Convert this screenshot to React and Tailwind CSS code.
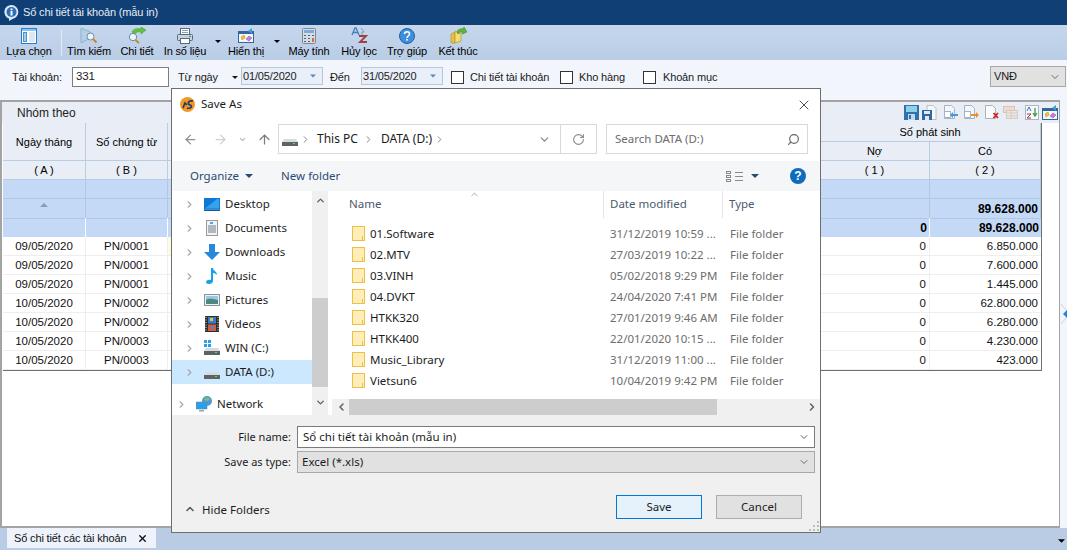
import React from 'react';
import { ArrowLeft, ArrowRight, ArrowUp, ChevronDown, ChevronLeft, ChevronRight, ChevronUp, RotateCw, Search, X } from 'lucide-react';

const Caret = ({ className = "" }) => (
    <svg width="8" height="4" viewBox="0 0 8 4" className={className}><path d="M0 0h8L4 4z" fill="currentColor" /></svg>
);

/* toolbar icons */
const IconChoose = () => (
    <svg width="16" height="16" viewBox="0 0 16 16">
        <rect x="0.500" y="0.500" width="15" height="15" fill="#fff" stroke="#1f7fd0" />
        <rect x="1" y="1" width="14" height="2" fill="#8cc4f0" />
        <rect x="2" y="4" width="4" height="10" fill="#4a94d4" />
        <path d="M3 6h2M3 8h2M3 10h2M3 12h2" stroke="#fff" />
        <rect x="8" y="4" width="6" height="10" fill="#dfe6ee" />
    </svg>
);
const IconSearch = () => (
    <svg width="18" height="17" viewBox="0 0 18 17">
        <path d="M1 1l9 4v6l-9 5z" fill="#b5cfe8" stroke="#8fb0d2" />
        <circle cx="10.500" cy="9.500" r="3.500" fill="#eef6fc" stroke="#6f8aa8" />
        <path d="M13 12l3.500 3.500" stroke="#c9852a" strokeWidth="2" />
    </svg>
);
const IconDetail = () => (
    <svg width="20" height="17" viewBox="0 0 20 17">
        <circle cx="6" cy="10" r="3.700" fill="#eaf3fb" stroke="#6f8aa8" />
        <path d="M8.500 13l3.500 3" stroke="#c9852a" strokeWidth="2" />
        <path d="M5 5c1-3 5-4 9-3V0l5 3-5 4V5c-3-.5-5 0-6 2z" fill="#62c23c" stroke="#3f9a28" strokeWidth=".5" />
    </svg>
);
const IconPrint = () => (
    <svg width="16" height="16" viewBox="0 0 16 16">
        <rect x="3.500" y="0.500" width="9" height="6" fill="#fff" stroke="#55697f" />
        <path d="M5 2.500h6M5 4.500h6" stroke="#8aa2ba" />
        <rect x="0.500" y="6.500" width="15" height="6" rx="1" fill="#c8d2dc" stroke="#55697f" />
        <rect x="3.500" y="10.500" width="9" height="5" fill="#fff" stroke="#55697f" />
        <rect x="12" y="8" width="2" height="1" fill="#3b9a3b" />
    </svg>
);
const IconDisplay = ({ size = 16 }) => (
    <svg width={size} height={size} viewBox="0 0 16 16">
        <rect x="0.500" y="3.500" width="15" height="11" fill="#f4f7fb" stroke="#33669c" />
        <rect x="1" y="4" width="14" height="2" fill="#33669c" />
        <path d="M3 9l3-2 1 3-3 2z" fill="#f4c430" stroke="#b78a16" strokeWidth=".5" />
        <path d="M8 11l3-3 3 2-3 3z" fill="#d078de" stroke="#8a4a9c" strokeWidth=".5" />
        <path d="M10 3l4-3v6z" fill="#3f9be0" />
    </svg>
);
const IconCalc = () => (
    <svg width="14" height="16" viewBox="0 0 14 16">
        <rect x="0.500" y="0.500" width="13" height="15" rx="1" fill="#d7dde4" stroke="#7b8794" />
        <rect x="2" y="2" width="10" height="3" fill="#7fa9d6" />
        <path d="M2 7h2v1H2zM6 7h2v1H6zM10 7h2v1h-2zM2 10h2v1H2zM6 10h2v1H6zM2 13h2v1H2zM6 13h2v1H6z" fill="#52627a" />
        <path d="M10 10h2v4h-2z" fill="#d86a3a" />
    </svg>
);
const IconSort = () => (
    <svg width="17" height="17" viewBox="0 0 17 17">
        <path d="M1 8l3-7h1l3 7M2.500 5.500h4" fill="none" stroke="#3f7fc0" strokeWidth="1.300" />
        <path d="M8 9h7l-6 6h7" fill="none" stroke="#a04040" strokeWidth="1.800" />
        <path d="M10 1l3 4h-2v3" fill="none" stroke="#7f9ab8" />
    </svg>
);
const IconHelp = () => (
    <svg width="16" height="16" viewBox="0 0 16 16">
        <circle cx="8" cy="8" r="7.500" fill="#3f8fdc" stroke="#1d5fa8" />
        <path d="M5.500 6c0-3 5-3 5 0 0 2-2.500 2-2.500 4" fill="none" stroke="#fff" strokeWidth="1.500" />
        <rect x="7.200" y="11" width="1.600" height="1.600" fill="#fff" />
    </svg>
);
const IconExit = () => (
    <svg width="17" height="17" viewBox="0 0 17 17">
        <path d="M1 7l4-2v11H1z" fill="#e8c24a" stroke="#a98a20" strokeWidth=".6" />
        <path d="M5 4l6 1v9l-6 2z" fill="#f6dc72" stroke="#a98a20" strokeWidth=".6" />
        <path d="M7 6c0-3 3-5 6-4l1-2 3 5-5 2 1-2c-2-.5-4 0-4 2z" fill="#5fb53f" stroke="#35801f" strokeWidth=".5" />
    </svg>
);

/* small grid header icons */
const SaveIcon = () => (
    <svg width="15" height="15" viewBox="0 0 15 15">
        <rect width="15" height="15" fill="#2f73ad" />
        <rect x="2" y="1" width="11" height="6" fill="#8fd0e4" />
        <rect x="4" y="9" width="7" height="6" fill="#c5d9ea" />
        <rect x="5" y="10" width="2" height="4" fill="#2f73ad" />
    </svg>
);
const SaveDocIcon = () => (
    <svg width="15" height="15" viewBox="0 0 15 15">
        <path d="M5 .5h6l3 3v11H5z" fill="#f7f9fb" stroke="#b4c0cc" />
        <rect x="0" y="5" width="10" height="10" fill="#2f69a3" />
        <rect x="2" y="6" width="6" height="3" fill="#dfeaf4" />
        <rect x="3" y="11" width="4" height="4" fill="#dfeaf4" />
    </svg>
);
const DocIcon = ({ badge }) => (
    <svg width="16" height="15" viewBox="0 0 16 15">
        <path d="M1.500.5h7l3 3v10h-10z" fill="#f5f7fa" stroke="#a5b3c2" />
        <rect x="1.500" y="6.500" width="6" height="6" fill="#fff" stroke="#a5b3c2" />
        {badge === 'left' && <path d="M7 10l3-3v2h5v2h-5v2z" fill="#4a96d8" />}
        {badge === 'right' && <path d="M16 10l-3-3v2H8v2h5v2z" fill="#ee8d2e" />}
    </svg>
);
const DeleteDocIcon = () => (
    <svg width="16" height="15" viewBox="0 0 16 15">
        <path d="M1.500.5h7l3 3v10h-10z" fill="#fafbfc" stroke="#a5b3c2" />
        <path d="M9.500 8l4.500 5M14 8l-4.500 5" stroke="#d81f1f" strokeWidth="1.800" />
    </svg>
);
const TableIcon = () => (
    <svg width="15" height="15" viewBox="0 0 15 15" opacity=".75">
        <rect x="0.500" y="1.500" width="11" height="6" fill="#f0d3c8" stroke="#dab4a4" />
        <rect x="3.500" y="5.500" width="11" height="8" fill="#f3e8d9" stroke="#c9c0b4" />
        <path d="M4 8h10M4 11h10M8 6v7" stroke="#c9c0b4" />
    </svg>
);
const SortDownIcon = () => (
    <svg width="14" height="15" viewBox="0 0 14 15">
        <rect x="0.500" y="0.500" width="13" height="14" fill="#f7f9fc" stroke="#aab8c6" />
        <path d="M2 6l2-4 2 4" fill="none" stroke="#2f79bf" />
        <path d="M2 9h4l-4 4h4" fill="none" stroke="#a33b3b" />
        <path d="M10 3v7M8 8l2 3 2-3" fill="none" stroke="#3e9c3e" strokeWidth="1.300" />
    </svg>
);

/* explorer icons */
const DriveIcon = ({ win }) => (
    <svg width="16" height="16" viewBox="0 0 16 16">
        {win && <path d="M0 0h3v3H0zM4 0h3v3H4zM0 4h3v3H0zM4 4h3v3H4z" fill="#27a0e8" />}
        <path d="M2 8h12l2 3H0z" fill="#d8dbde" />
        <rect x="0" y="11" width="16" height="4" fill="#5d6266" />
        <rect x="11" y="12" width="2" height="1" fill="#55e05a" />
    </svg>
);
const DesktopIcon = () => (
    <svg width="16" height="13" viewBox="0 0 16 13">
        <rect x="0" y="0" width="16" height="11.500" fill="#0f78d6" />
        <path d="M1 10.500L13 1h2v9.500z" fill="#35a2ec" />
        <rect x="0" y="11.500" width="16" height="1.500" fill="#0b5aa5" />
    </svg>
);
const DocumentsIcon = () => (
    <svg width="12" height="16" viewBox="0 0 12 16">
        <rect x="0.500" y="0.500" width="11" height="15" fill="#f3f3f3" stroke="#9a9a9a" />
        <path d="M4 3h3" stroke="#2a8ad8" strokeWidth="1.500" />
        <path d="M2 6h8M2 8h8M2 10h8M2 12h8" stroke="#6d7d8d" />
    </svg>
);
const DownloadsIcon = () => (
    <svg width="16" height="16" viewBox="0 0 16 16"><path d="M5 0h6v8h5l-8 8-8-8h5z" fill="#2a88dc" /></svg>
);
const MusicIcon = () => (
    <svg width="12" height="16" viewBox="0 0 12 16"><path d="M5 0h2c0 3 4 3 4 7-1-1-2-2-4-2v8c0 2-2 3-4 3s-3-1-3-2 2-3 5-2z" fill="#18a0ee" /></svg>
);
const PicturesIcon = () => (
    <svg width="16" height="12" viewBox="0 0 16 12">
        <rect x="0.500" y="0.500" width="15" height="11" fill="#eef2f4" stroke="#8a9299" />
        <rect x="2" y="2" width="12" height="4" fill="#9cc6e4" />
        <path d="M2 6c3-2 6-1 12 0v4H2z" fill="#4d8a7d" />
    </svg>
);
const VideosIcon = () => (
    <svg width="14" height="16" viewBox="0 0 14 16">
        <rect width="14" height="16" fill="#2e2e2e" />
        <rect x="3" y="1" width="8" height="6.500" fill="#2f7fd0" />
        <rect x="3" y="8.500" width="8" height="6.500" fill="#d85a3a" />
        <rect x="5" y="2" width="3" height="3" fill="#f0c040" />
        <rect x="6" y="10" width="3" height="3" fill="#3a8fd8" />
        <path d="M1 1v14M13 1v14" stroke="#ddd" strokeDasharray="1 1.500" />
    </svg>
);
const NetworkIcon = () => (
    <svg width="16" height="16" viewBox="0 0 16 16">
        <circle cx="11" cy="5" r="5" fill="#4f98d8" />
        <path d="M8 3c2-2 5-2 6 0-1 2-4 3-6 0z" fill="#7cc06a" />
        <rect x="0" y="6" width="11" height="7" fill="#25a0ee" stroke="#7d8a95" strokeWidth=".6" />
        <rect x="3" y="14" width="5" height="1.500" fill="#9aa3ab" />
    </svg>
);
const FolderIcon = () => (
    <svg width="13" height="15" viewBox="0 0 13 15">
        <rect x="0.500" y="0.500" width="12" height="14" fill="#ffeeb8" stroke="#eec04a" />
        <path d="M10.500 10v4.500" stroke="#eec04a" />
    </svg>
);
const AppLogo = () => (
    <svg width="15" height="15" viewBox="0 0 15 15">
        <circle cx="7.500" cy="7.500" r="7.500" fill="#f09a25" />
        <path d="M3 11l2-5 2 2M13 4C8 3 7 7 10 8s1 4-3 3" fill="none" stroke="#23396b" strokeWidth="1.700" />
    </svg>
);

const tools = [
    { label: 'Tìm kiếm', icon: IconSearch, width: 'w-[48px]' },
    { label: 'Chi tiết', icon: IconDetail, width: 'w-[48px]' },
    { label: 'In số liệu', icon: IconPrint, width: 'w-[48px]', caret: 'w-[18px]' },
    { label: 'Hiển thị', icon: IconDisplay, width: 'w-[38px]', caret: 'w-[24px]' },
    { label: 'Máy tính', icon: IconCalc, width: 'w-[40px]' },
    { label: 'Hủy lọc', icon: IconSort, width: 'w-[60px]' },
    { label: 'Trợ giúp', icon: IconHelp, width: 'w-[36px]' },
    { label: 'Kết thúc', icon: IconExit, width: 'w-[66px]' },
];

const rows = [
    ['09/05/2020', 'PN/0001', '6.850.000'],
    ['09/05/2020', 'PN/0001', '7.600.000'],
    ['09/05/2020', 'PN/0001', '1.445.000'],
    ['10/05/2020', 'PN/0002', '62.800.000'],
    ['10/05/2020', 'PN/0002', '6.280.000'],
    ['10/05/2020', 'PN/0003', '4.230.000'],
    ['10/05/2020', 'PN/0003', '423.000'],
];

const navItems = [
    { label: 'Desktop', icon: DesktopIcon },
    { label: 'Documents', icon: DocumentsIcon },
    { label: 'Downloads', icon: DownloadsIcon },
    { label: 'Music', icon: MusicIcon },
    { label: 'Pictures', icon: PicturesIcon },
    { label: 'Videos', icon: VideosIcon },
    { label: 'WIN (C:)', icon: () => <DriveIcon win /> },
    { label: 'DATA (D:)', icon: DriveIcon, active: true },
];

const folders = [
    ['01.Software', '31/12/2019 10:59 ...'],
    ['02.MTV', '27/03/2019 10:22 ...'],
    ['03.VINH', '05/02/2018 9:29 PM'],
    ['04.DVKT', '24/04/2020 7:41 PM'],
    ['HTKK320', '27/01/2019 9:46 AM'],
    ['HTKK400', '22/01/2020 10:15 ...'],
    ['Music_Library', '31/12/2019 11:00 ...'],
    ['Vietsun6', '10/04/2019 9:42 PM'],
];

const gridCols = "grid grid-cols-[83px_82px_1fr_110px_111px]";
const headCell = "flex items-center justify-center pt-[1px] bg-[#e9eef6] border-r border-b border-[#b9cde0] text-[11px]";
const compact = "text-[11px] tracking-[-0.15px]";

const Checkbox = () => <span className="block w-[13px] h-[13px] border border-[#333] bg-white shrink-0" />;

const DateBox = ({ value }) => (
    <div className="w-[82px] h-[18px] border border-[#b5c8de] bg-[#e9eff8] flex items-center justify-between pl-[1px] pr-[6px] text-[11px] text-[#222]">
        {value}
        <Caret className="text-[#5a86b8] w-[6px]" />
    </div>
);

function SaveDialog() {
    return (
        <div className="absolute left-[171px] top-[88px] w-[650px] h-[445px] border border-[#6e6e6e] bg-white flex flex-col font-['Noto_Sans',sans-serif] text-[11.5px] text-[#1c1c1c]">
            {/* title */}
            <div className="h-[31px] flex items-center pl-[8px] pr-[8px] shrink-0">
                <AppLogo />
                <span className="ml-[6px] -mt-[1px] text-[11.5px]">Save As</span>
                <X size={16} strokeWidth={1.2} className="ml-auto text-[#222]" />
            </div>

            {/* address row */}
            <div className="h-[41px] flex items-start shrink-0 pt-[4px]">
                <div className="w-[106px] h-[30px] flex items-center shrink-0 text-[#8f8f8f]">
                    <ArrowLeft size={15} className="ml-[11px]" />
                    <ArrowRight size={15} className="ml-[15px] text-[#cfcfcf]" />
                    <ChevronDown size={9} strokeWidth={3} className="ml-[10px] text-[#b5b5b5]" />
                    <ArrowUp size={15} className="ml-[10px] text-[#7b7b7b]" />
                </div>
                <div className="w-[319px] h-[30px] border border-[#d9d9d9] flex items-center shrink-0">
                    <span className="ml-[3px]"><DriveIcon /></span>
                    <ChevronRight size={11} strokeWidth={2} className="ml-[2px] text-[#7f7f7f]" />
                    <span className="ml-[6px] text-[12px]">This PC</span>
                    <ChevronRight size={11} strokeWidth={2} className="ml-[5px] text-[#7f7f7f]" />
                    <span className="ml-[7px] text-[12px]">DATA (D:)</span>
                    <ChevronRight size={11} strokeWidth={2} className="ml-[2px] text-[#7f7f7f]" />
                    <ChevronDown size={13} strokeWidth={2} className="ml-auto mr-[9px] text-[#7f7f7f]" />
                    <span className="w-[36px] h-full border-l border-[#d9d9d9] flex items-center justify-center">
                        <RotateCw size={13} className="text-[#8a8a8a]" />
                    </span>
                </div>
                <div className="ml-[9px] w-[202px] h-[30px] border border-[#d9d9d9] flex items-center justify-between pl-[8px] pr-[7px] text-[#6d6d6d]">
                    Search DATA (D:)
                    <Search size={13} strokeWidth={2.2} className="-scale-x-100 text-[#666]" />
                </div>
            </div>

            {/* command bar */}
            <div className="h-[30px] bg-[#f5f6f7] flex items-center shrink-0 text-[#2a4a75]">
                <span className="ml-[18px]">Organize</span>
                <Caret className="ml-[6px] text-[#2a4a75]" />
                <span className="ml-[28px]">New folder</span>
                <span className="ml-auto grid grid-cols-2 gap-x-[1px] gap-y-[1px] w-[17px]">
                    <span className="h-[3px] border border-[#8a8a8a] w-[5px]" /><span className="h-[1px] mt-[1px] bg-[#8a8a8a]" />
                    <span className="h-[3px] border border-[#8a8a8a] w-[5px]" /><span className="h-[1px] mt-[1px] bg-[#8a8a8a]" />
                    <span className="h-[3px] border border-[#8a8a8a] w-[5px]" /><span className="h-[1px] mt-[1px] bg-[#8a8a8a]" />
                </span>
                <Caret className="ml-[8px] text-[#2a4a75]" />
                <span className="ml-[31px] mr-[14px] w-4 h-4 rounded-full bg-[#0f6cbd] text-white font-bold text-[12px] flex items-center justify-center font-['Liberation_Sans',sans-serif]">?</span>
            </div>

            {/* body */}
            <div className="h-[224px] flex shrink-0">
                <div className="w-[140px] shrink-0 pt-[1px]">
                    {navItems.map((item) => (
                        <div key={item.label} className={`h-6 flex items-center ${item.active ? 'bg-[#cce8ff]' : ''}`}>
                            <ChevronRight size={11} strokeWidth={2.5} className="ml-[12px] text-[#a6a6a6]" />
                            <span className="w-[16px] ml-[9px] flex justify-center"><item.icon /></span>
                            <span className="ml-[5px]">{item.label}</span>
                        </div>
                    ))}
                    <div className="h-6 mt-[8px] flex items-center">
                        <ChevronRight size={11} strokeWidth={2.5} className="ml-[4px] text-[#a6a6a6]" />
                        <span className="ml-[9px]"><NetworkIcon /></span>
                        <span className="ml-[5px]">Network</span>
                    </div>
                </div>
                <div className="w-[16px] shrink-0 bg-[#f0f0f0] flex flex-col items-center">
                    <ChevronUp size={11} strokeWidth={3} className="mt-[4px] text-[#606060]" />
                    <div className="mt-[92px] w-full h-[89px] bg-[#cdcdcd]" />
                    <ChevronDown size={11} strokeWidth={3} className="mt-[10px] text-[#606060]" />
                </div>
                <div className="flex-1 ml-[4px] flex flex-col min-w-0">
                    <div className="h-[27px] flex shrink-0 text-[#4a5a70] relative">
                        <ChevronUp size={11} strokeWidth={1.5} className="absolute left-[137px] -top-[2px] text-[#8a8a8a]" />
                        <span className="w-[272px] pl-[17px] pt-[4px] border-r border-[#e5e5e5]">Name</span>
                        <span className="w-[119px] pl-[6px] pt-[4px] border-r border-[#e5e5e5]">Date modified</span>
                        <span className="pl-[6px] pt-[4px]">Type</span>
                    </div>
                    <div className="flex-1 pt-[5px]">
                        {folders.map(([name, date]) => (
                            <div key={name} className="h-[21px] flex items-center">
                                <span className="ml-[20px] w-[18px] shrink-0"><FolderIcon /></span>
                                <span className="w-[240px] shrink-0">{name}</span>
                                <span className="w-[120px] shrink-0 text-[#6d6d6d] whitespace-nowrap">{date}</span>
                                <span className="text-[#6d6d6d]">File folder</span>
                            </div>
                        ))}
                    </div>
                    <div className="h-[16px] bg-[#f0f0f0] flex items-center shrink-0">
                        <ChevronLeft size={12} strokeWidth={3} className="ml-[2px] text-[#606060] w-[15px]" />
                        <div className="w-[368px] h-full bg-[#cdcdcd]" />
                        <ChevronRight size={12} strokeWidth={3} className="ml-auto mr-[2px] text-[#606060]" />
                    </div>
                </div>
            </div>

            {/* footer */}
            <div className="flex-1 bg-[#f0f0f0] relative flex flex-col pl-[125px] pr-[5px] pt-[11px]">
                <div className="flex items-center h-[22px]">
                    <span className="w-[119px] -ml-[119px] -translate-x-[6px] text-right text-[11px]">File name:</span>
                    <div className="flex-1 h-full border border-[#7a7a7a] bg-white flex items-center justify-between pl-[5px] pr-[4px]">
                        Sổ chi tiết tài khoản (mẫu in)
                        <ChevronDown size={12} className="text-[#6d6d6d]" />
                    </div>
                </div>
                <div className="flex items-center h-[22px] mt-[3px]">
                    <span className="w-[119px] -ml-[119px] -translate-x-[6px] text-right text-[11px]">Save as type:</span>
                    <div className="flex-1 h-full border border-[#a8a8a8] bg-[#e1e1e1] flex items-center justify-between pl-[4px] pr-[4px]">
                        Excel (*.xls)
                        <ChevronDown size={12} className="text-[#6d6d6d]" />
                    </div>
                </div>
                <div className="flex justify-end gap-[14px] mt-[22px] pr-[13px]">
                    <button className="w-[86px] h-[24px] border border-[#0078d7] bg-[#e5f1fb]">Save</button>
                    <button className="w-[86px] h-[24px] border border-[#adadad] bg-[#e1e1e1]">Cancel</button>
                </div>
                <div className="absolute left-[12px] bottom-[14px] flex items-center">
                    <ChevronUp size={12} strokeWidth={3} className="text-[#555]" />
                    <span className="ml-[6px]">Hide Folders</span>
                </div>
                <svg width="10" height="10" viewBox="0 0 10 10" className="absolute right-[1px] bottom-[1px]">
                    <path d="M8 0h2v2H8zM4 4h2v2H4zM8 4h2v2H8zM0 8h2v2H0zM4 8h2v2H4zM8 8h2v2H8z" fill="#bdbdbd" />
                </svg>
            </div>
        </div>
    );
}

export default function App() {
    return (
        <div className="relative w-[1067px] h-[550px] overflow-hidden flex flex-col bg-[#f2f6fc] font-['Liberation_Sans',sans-serif] text-[11.5px] text-black">
            {/* Title bar */}
            <div className={`h-[25px] bg-[#0f3f74] flex items-center pl-[3px] text-[#e6edf5] shrink-0 ${compact}`}>
                <svg width="17" height="17" viewBox="0 0 17 17">
                    <path d="M8.500 1a7 7 0 0 1 1 13.900L6 17v-2.400A7 7 0 0 1 8.500 1z" fill="#dbe9f7" />
                    <circle cx="8.500" cy="8" r="5" fill="#2f6fb5" />
                    <rect x="7.500" y="7" width="2" height="4.500" fill="#fff" />
                    <rect x="7.500" y="4.500" width="2" height="1.700" fill="#fff" />
                </svg>
                <span className="ml-[3px]">Sổ chi tiết tài khoản (mẫu in)</span>
            </div>

            {/* Toolbar */}
            <div className={`h-[35px] bg-gradient-to-b from-[#c6d7ec] to-[#b9cde6] flex shrink-0 ${compact}`}>
                <div className="w-[58px] flex flex-col items-center pt-[2px]">
                    <span className="h-[17px] flex items-end"><IconChoose /></span>
                    <span className="whitespace-nowrap leading-[13px] mt-[1px]">Lựa chọn</span>
                </div>
                <div className="w-[7px] flex justify-start pl-[3px] pt-[5px]">
                    <span className="w-[1px] h-[26px] bg-[#e3ebf5]" />
                </div>
                {tools.map((tool) => (
                    <React.Fragment key={tool.label}>
                        <div className={`${tool.width} flex flex-col items-center pt-[2px]`}>
                            <span className="h-[17px] flex items-end"><tool.icon /></span>
                            <span className="whitespace-nowrap leading-[13px] mt-[1px]">{tool.label}</span>
                        </div>
                        {tool.caret && (
                            <div className={`${tool.caret} flex justify-center pt-[15px]`}>
                                <Caret className="w-[6px] h-[3px]" />
                            </div>
                        )}
                    </React.Fragment>
                ))}
            </div>

            {/* Filter bar */}
            <div className={`h-[40px] flex items-start pt-[7px] pl-[12px] shrink-0 text-[#1a1a1a] ${compact}`}>
                <span className="w-[60px] leading-5">Tài khoản:</span>
                <div className="w-[97px] h-5 border border-[#7d7d7d] bg-white flex items-center pl-[3px] text-[11.5px]">331</div>
                <span className="w-[54px] ml-[9px] leading-5">Từ ngày</span>
                <span className="w-[9px] h-5 flex items-center"><Caret className="w-[6px] h-[3px]" /></span>
                <DateBox value="01/05/2020" />
                <span className="w-[31px] ml-[7px] leading-5">Đến</span>
                <DateBox value="31/05/2020" />
                <span className="ml-[8px] mt-[4px]"><Checkbox /></span>
                <span className="ml-[6px] w-[90px] leading-5 whitespace-nowrap">Chi tiết tài khoản</span>
                <span className="mt-[4px]"><Checkbox /></span>
                <span className="ml-[6px] w-[64px] leading-5">Kho hàng</span>
                <span className="mt-[4px]"><Checkbox /></span>
                <span className="ml-[7px] leading-5">Khoản mục</span>
                <div className="ml-auto mr-[1px] -mt-[1px] w-[76px] h-[21px] border border-[#a8a8a8] bg-[#e1e1e1] flex items-center justify-between pl-[3px] pr-[4px]">
                    VNĐ
                    <ChevronDown size={12} className="text-[#6d6d6d]" />
                </div>
            </div>

            {/* Main */}
            <div className="h-[428px] flex shrink-0">
                <div className="w-[1060px] border-t-2 border-b-2 border-l-2 border-[#a3a3a3] border-r border-r-[#a3a3a3] bg-white flex flex-col">
                    <div className="h-[21px] bg-[#e9eef6] flex items-center pl-[15px] pr-[1px] shrink-0">
                        <span className="text-[#222] text-[12px] pt-[1px]">Nhóm theo</span>
                        <div className="ml-auto flex items-center">
                            <SaveIcon />
                            <span className="ml-[3px]"><SaveDocIcon /></span>
                            <span className="ml-[6px]"><DocIcon badge="left" /></span>
                            <span className="ml-[4px]"><DocIcon badge="right" /></span>
                            <span className="ml-[5px]"><DeleteDocIcon /></span>
                            <span className="ml-[3px]"><TableIcon /></span>
                            <span className="ml-[7px]"><SortDownIcon /></span>
                            <span className="ml-[3px]"><IconDisplay size={16} /></span>
                        </div>
                    </div>
                    <div className="w-[1039px] ml-px border-r border-b border-[#6e6e6e]">
                        <div className={`${gridCols} grid-rows-[19px_19px_19px]`}>
                            <div className={`${headCell} row-span-2`}>Ngày tháng</div>
                            <div className={`${headCell} row-span-2`}>Số chứng từ</div>
                            <div className={`${headCell} row-span-2`} />
                            <div className={`${headCell} col-span-2`}>Số phát sinh</div>
                            <div className={headCell}>Nợ</div>
                            <div className={headCell}>Có</div>
                            <div className={headCell}>( A )</div>
                            <div className={headCell}>( B )</div>
                            <div className={headCell} />
                            <div className={headCell}>( 1 )</div>
                            <div className={headCell}>( 2 )</div>
                        </div>
                        <div className={`${gridCols} h-[19px] bg-[#c3d9f5]`}>
                            <div className="border-r border-b border-[#b0c8e4]" />
                            <div className="border-r border-b border-[#b0c8e4]" />
                            <div className="border-r border-b border-[#b0c8e4]" />
                            <div className="border-r border-b border-[#b0c8e4]" />
                            <div className="border-r border-b border-[#b0c8e4]" />
                        </div>
                        <div className={`${gridCols} h-[19px] bg-[#c3d9f5] font-bold text-[12px]`}>
                            <div className="border-r border-b border-[#b0c8e4] flex justify-center pt-[4px]"><Caret className="text-[#7fa0bd] w-[8px] h-[4px] rotate-180" /></div>
                            <div className="border-r border-b border-[#b0c8e4]" />
                            <div className="border-r border-b border-[#b0c8e4]" />
                            <div className="border-r border-b border-[#b0c8e4]" />
                            <div className="border-r border-b border-[#b0c8e4] flex items-center justify-end pt-[1px] pr-[2px]">89.628.000</div>
                        </div>
                        <div className={`${gridCols} h-[19px] bg-[#c3d9f5] font-bold text-[12px]`}>
                            <div className="border-r border-b border-white" />
                            <div className="border-r border-b border-white" />
                            <div className="border-r border-b border-white" />
                            <div className="border-r border-b border-white flex items-center justify-end pt-[1px] pr-[2px]">0</div>
                            <div className="border-b border-white flex items-center justify-end pt-[1px] pr-[2px]">89.628.000</div>
                        </div>
                        {rows.map(([date, doc, amount], idx) => (
                            <div key={idx} className={`${gridCols} h-[19px] text-[#111]`}>
                                <div className="border-r border-b border-[#eeeeee] flex items-center justify-center pt-[1px]">{date}</div>
                                <div className="border-r border-b border-[#eeeeee] flex items-center justify-center pt-[1px]">{doc}</div>
                                <div className={`border-r border-b border-[#eeeeee] ${idx === 0 ? 'bg-[#fffbe0]' : ''}`} />
                                <div className="border-r border-b border-[#eeeeee] flex items-center justify-end pt-[1px] pr-[3px]">0</div>
                                <div className="border-b border-[#eeeeee] flex items-center justify-end pt-[1px] pr-[3px]">{amount}</div>
                            </div>
                        ))}
                    </div>
                </div>
                <div className="flex-1 flex items-center justify-end">
                    <svg width="6" height="20" viewBox="0 0 6 20">
                        <path d="M0 0l6 7M0 20l6-7" stroke="#c8d2de" fill="none" />
                        <path d="M6 6v8l-4-4z" fill="#1f86e8" />
                    </svg>
                </div>
            </div>

            {/* Bottom tabs */}
            <div className="flex-1 bg-[#b9cce4] flex items-start pl-[7px] relative">
                <div className={`w-[149px] h-[20px] bg-[#eef3fb] flex items-center pl-[7px] text-[#111] ${compact}`}>
                    <span className="whitespace-nowrap">Sổ chi tiết các tài khoản</span>
                    <X size={11} strokeWidth={3} className="ml-auto mr-[8px]" />
                </div>
                <Caret className="absolute right-[2px] top-[11px] w-[7px] h-[4px]" />
            </div>

            <SaveDialog />
        </div>
    );
}
